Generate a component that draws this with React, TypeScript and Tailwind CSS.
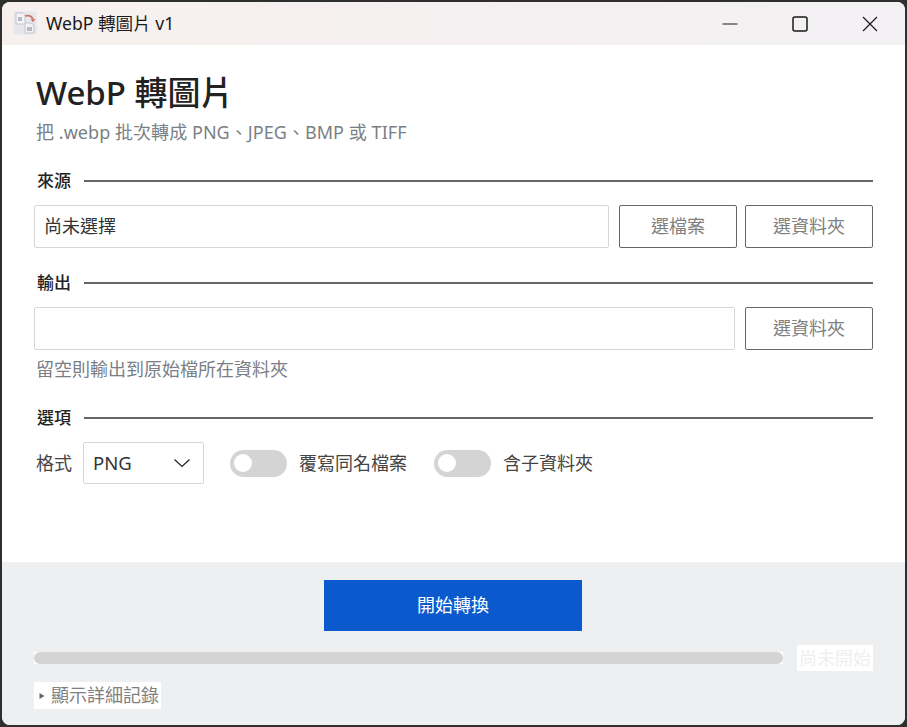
import { useState } from "react";

const FONT = "[font-family:'Noto_Sans','Noto_Sans_CJK_TC',sans-serif]";

function AppIcon() {
  return (
    <svg className="blur-[0.4px]" width="24" height="24" viewBox="0 0 24 24">
      <rect x="0.5" y="0.5" width="23" height="23" rx="1" fill="#e6e6ec" />
      <path d="M3 2h7l2 2v9H3z" fill="#f4f4f7" stroke="#c6c8ce" />
      <path d="M12 12h6l3 2v8h-9z" fill="#f2f2f5" stroke="#c6c8ce" />
      <rect x="5" y="6" width="4" height="4" fill="#b8bac1" />
      <rect x="14" y="16" width="5" height="4" fill="#b8bac1" />
      <path d="M12 5c4-1 7 0 8 4" fill="none" stroke="#c9776f" strokeWidth="1.8" />
      <path d="M17.5 8.5l2.7 2.8 2.3-3.2z" fill="#c9776f" />
    </svg>
  );
}

function WindowControls() {
  return (
    <div className="flex items-center">
      <div className="w-[70px] flex justify-center">
        <svg width="16" height="16" viewBox="0 0 16 16">
          <path d="M0.5 8h15" stroke="#1a1a1a" strokeWidth="1" />
        </svg>
      </div>
      <div className="w-[70px] flex justify-center">
        <svg width="16" height="16" viewBox="0 0 16 16">
          <rect x="1" y="1" width="14" height="14" rx="2" fill="none" stroke="#1a1a1a" strokeWidth="1.5" />
        </svg>
      </div>
      <div className="w-[70px] flex justify-center">
        <svg width="16" height="16" viewBox="0 0 16 16">
          <path d="M1 1l14 14M15 1L1 15" stroke="#1a1a1a" strokeWidth="1.2" />
        </svg>
      </div>
    </div>
  );
}

function SectionTitle({ label }: { label: string }) {
  return (
    <div className="flex items-center h-[24px] pl-[3px]">
      <span className="text-[17px] leading-[24px] font-medium text-[#222222]">{label}</span>
      <div className="ml-[13px] flex-1 h-[2px] bg-[#666666]" />
    </div>
  );
}

function OutlineButton({ label, width }: { label: string; width: string }) {
  return (
    <button className={`h-[43px] ${width} shrink-0 rounded-[2px] border border-[#666666] bg-white text-[18px] text-[#808080]`}>
      {label}
    </button>
  );
}

function Toggle({ label, on, onClick }: { label: string; on: boolean; onClick: () => void }) {
  return (
    <button className="flex items-center gap-[12px]" onClick={onClick}>
      <span className={`flex items-center h-[27px] w-[57px] rounded-full px-[4px] ${on ? "bg-[#0b5acd] justify-end" : "bg-[#d4d4d4]"}`}>
        <span className="block w-[18px] h-[18px] rounded-full bg-white" />
      </span>
      <span className="text-[18px] text-[#444444]">{label}</span>
    </button>
  );
}

export default function App() {
  const [overwrite, setOverwrite] = useState(false);
  const [recursive, setRecursive] = useState(false);

  return (
    <div className={`${FONT} w-[907px] h-[727px] bg-[#2f2f2f] p-[2px]`}>
      <div className="h-full flex flex-col rounded-[8px] overflow-hidden bg-white">
        {/* Title bar */}
        <div className="h-[43px] shrink-0 flex items-center justify-between bg-gradient-to-r from-[#f7f0ee] to-[#f3f1f4]">
          <div className="flex items-center pl-[11px] gap-[9px]">
            <AppIcon />
            <span className="text-[17.6px] text-[#1a1a1a]">WebP 轉圖片 v1</span>
          </div>
          <WindowControls />
        </div>

        {/* Main */}
        <div className="flex-1 flex flex-col px-[32px]">
          <div className="pl-[2px] pt-[26px]">
            <h1 className="text-[33px] leading-[44px] font-medium text-[#222222]">WebP 轉圖片</h1>
            <p className="text-[18px] leading-[26px] tracking-[0.05px] text-[#7a7f85] mt-[4px]">把 .webp 批次轉成 PNG、JPEG、BMP 或 TIFF</p>
          </div>

          <div className="mt-[24px]">
            <SectionTitle label="來源" />
            <div className="flex mt-[12px]">
              <div className="flex-1 h-[43px] flex items-center px-[9px] border border-[#d6d6d6] rounded-[2px] text-[18px] text-[#333333]">
                尚未選擇
              </div>
              <div className="ml-[10px]"><OutlineButton label="選檔案" width="w-[118px]" /></div>
              <div className="ml-[8px]"><OutlineButton label="選資料夾" width="w-[128px]" /></div>
            </div>
          </div>

          <div className="mt-[23px]">
            <SectionTitle label="輸出" />
            <div className="flex mt-[12px]">
              <div className="flex-1 h-[43px] border border-[#d6d6d6] rounded-[2px]" />
              <div className="ml-[10px]"><OutlineButton label="選資料夾" width="w-[128px]" /></div>
            </div>
            <p className="pl-[2px] mt-[7px] text-[18px] leading-[24px] text-[#7a7f85]">留空則輸出到原始檔所在資料夾</p>
          </div>

          <div className="mt-[25px]">
            <SectionTitle label="選項" />
            <div className="flex items-center mt-[12px] h-[42px]">
              <span className="pl-[2px] w-[49px] text-[18px] leading-[40px] text-[#444444]">格式</span>
              <div className="flex items-center justify-between w-[121px] h-[42px] pl-[9px] pr-[12px] border border-[#d6d6d6] rounded-[2px] text-[18.5px] text-[#333333]">
                PNG
                <svg width="18" height="10" viewBox="0 0 18 10">
                  <path d="M1.5 1.5L9 8.5l7.5-7" fill="none" stroke="#222222" strokeWidth="1.2" />
                </svg>
              </div>
              <div className="ml-[26px]">
                <Toggle label="覆寫同名檔案" on={overwrite} onClick={() => setOverwrite(!overwrite)} />
              </div>
              <div className="ml-[27px]">
                <Toggle label="含子資料夾" on={recursive} onClick={() => setRecursive(!recursive)} />
              </div>
            </div>
          </div>
        </div>

        {/* Footer */}
        <div className="h-[163px] shrink-0 bg-[#eeeff1] px-[32px] pt-[18px] flex flex-col">
          <button className="self-start ml-[290px] w-[258px] h-[51px] bg-[#0b5acd] text-white text-[18px]">開始轉換</button>
          <div className="flex items-center mt-[14px] h-[26px]">
            <div className="w-[749px] h-[12px] bg-white">
              <div className="h-full rounded-full bg-[#d4d4d4]" />
            </div>
            <span className="ml-[14px] w-[76px] h-[26px] bg-white text-[#eeeff1] text-[18px] leading-[26px] text-center whitespace-nowrap">尚未開始</span>
          </div>
          <div className="mt-[11px] self-start flex items-center h-[27px] w-[127px] bg-white text-[18px] text-[#808080] whitespace-nowrap">
            <svg className="ml-[5px] mr-[6px] shrink-0" width="6" height="8" viewBox="0 0 6 8">
              <path d="M0.5 1l5 3-5 3z" fill="#666666" />
            </svg>
            顯示詳細記錄
          </div>
        </div>
      </div>
    </div>
  );
}
